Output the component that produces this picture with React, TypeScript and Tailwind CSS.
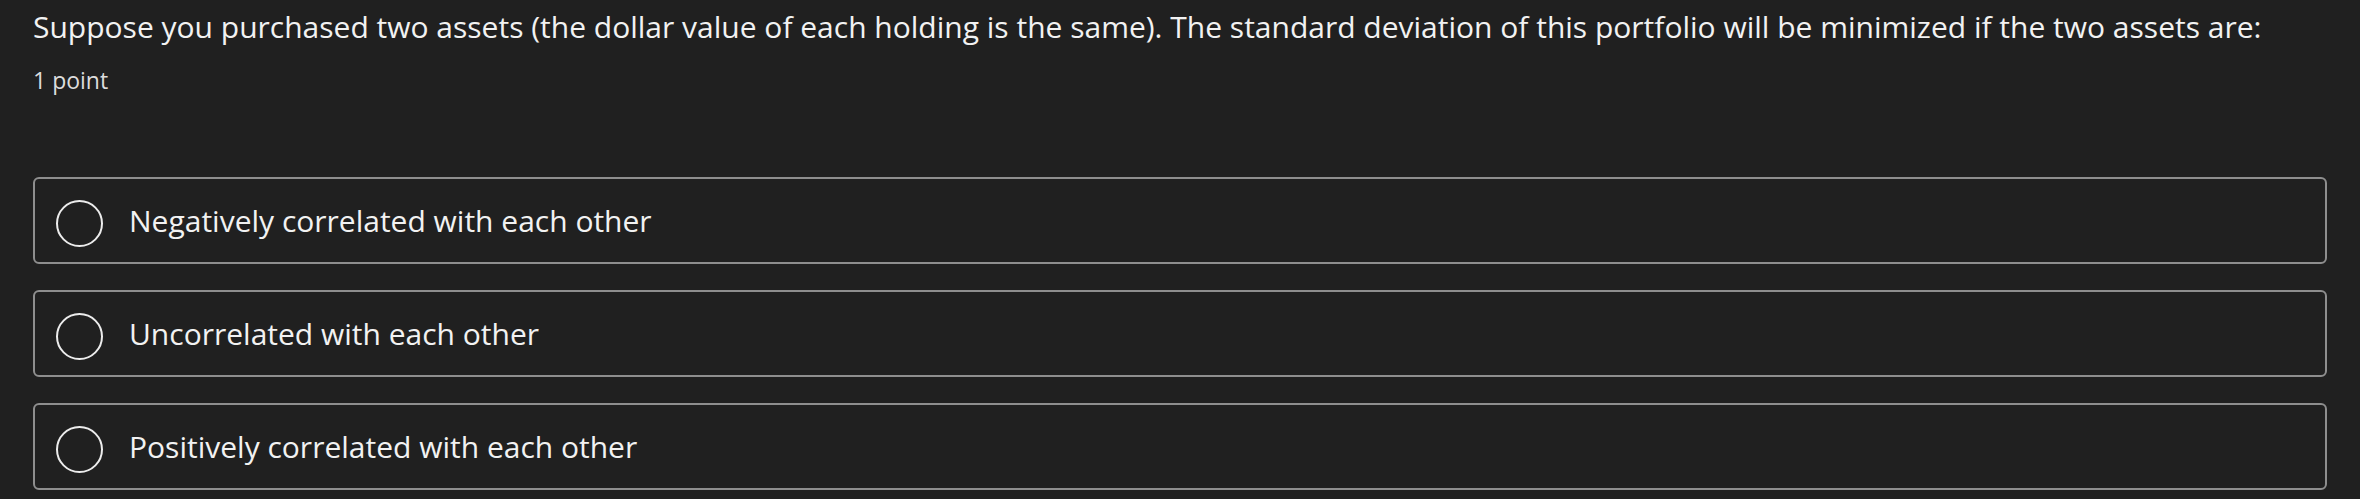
import React from 'react';

// Answer options for the quiz question
const OPTIONS = [
  'Negatively correlated with each other',
  'Uncorrelated with each other',
  'Positively correlated with each other',
];

const QUESTION =
  'Suppose you purchased two assets (the dollar value of each holding is the same). The standard deviation of this portfolio will be minimized if the two assets are:';

const App: React.FC = () => {
  return (
    <div
      className="min-h-[499px] w-full bg-[#202020] px-[33px] pt-[7px] text-[#f2f2f2]"
      style={{ fontFamily: '"Open Sans", "Noto Sans", sans-serif' }}
    >
      <p className="text-[30px] leading-[40px] whitespace-nowrap">{QUESTION}</p>
      <p className="mt-[17px] text-[23px] leading-[32px] text-[#dcdcdc]">1 point</p>

      <div className="mt-[81px] flex flex-col gap-[26px]">
        {OPTIONS.map((opt) => (
          <label
            key={opt}
            className="flex h-[87px] items-center rounded-[6px] border-2 border-[#8e8e8e] pl-[21px]"
          >
            <span className="mt-[5px] h-[47px] w-[47px] shrink-0 rounded-full border-2 border-[#ececec]" />
            <span className="ml-[26px] text-[30px] leading-[40px] text-[#f2f2f2]">{opt}</span>
          </label>
        ))}
      </div>
    </div>
  );
};

export default App;
